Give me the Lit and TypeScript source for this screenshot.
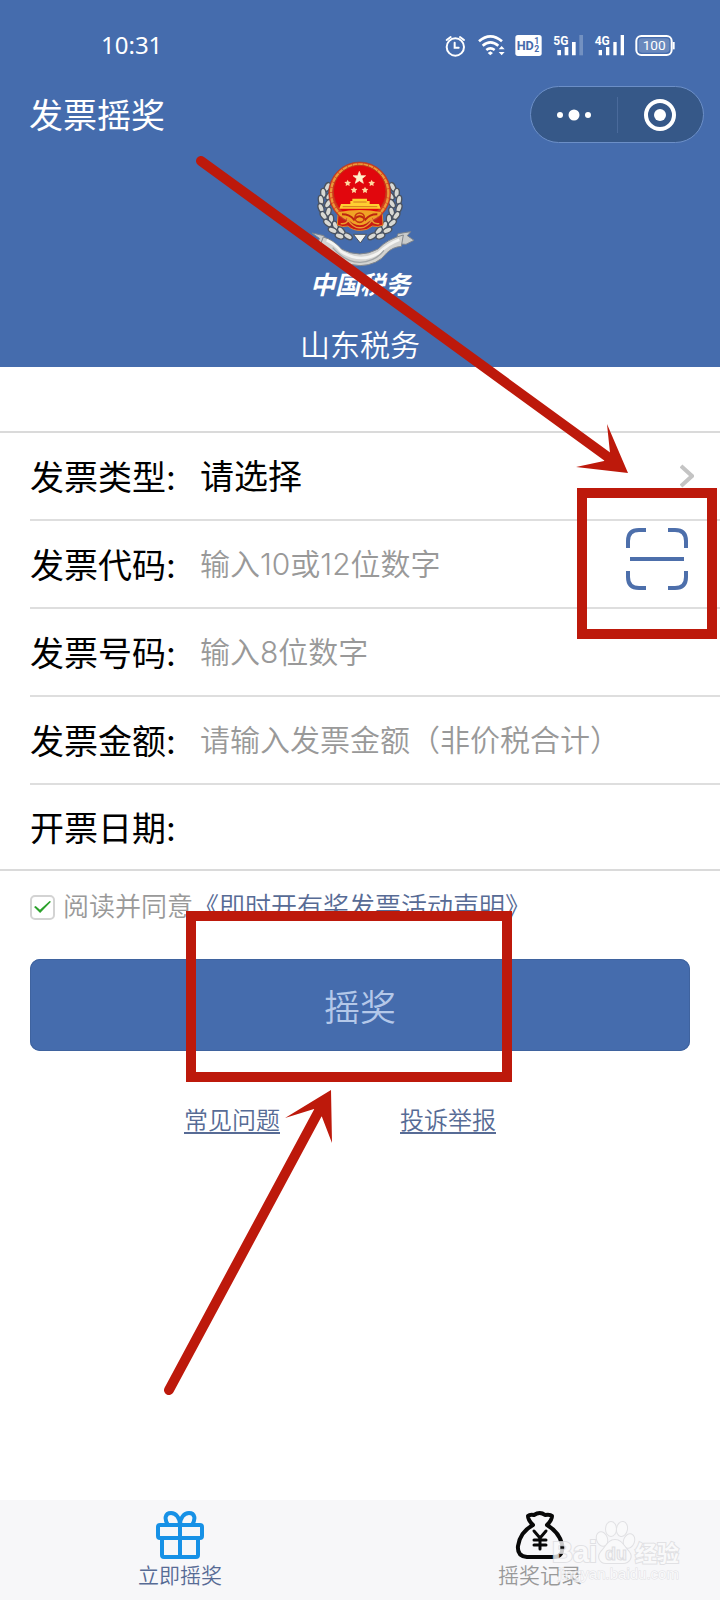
import { LitElement, html, svg, css } from "lit";
import { customElement, state } from "lit/decorators.js";

@customElement("status-icons")
class StatusIcons extends LitElement {
  static styles = css`
    :host { display: block; }
    .icons { display: block; width: 232px; height: 24px; fill: none; stroke: #fff; }
    .solid { fill: #fff; stroke: none; }
    .hd { fill: #456cad; stroke: none; font: 700 38px Roboto, sans-serif; }
    .hd-small { fill: #456cad; stroke: none; font: 700 26px Roboto, sans-serif; }
    .net { fill: #fff; stroke: none; font: 700 36px Roboto, sans-serif; }
    .level { fill: #fff; stroke: none; font: 400 41px Roboto, sans-serif; }
  `;
  render() {
    return html`<svg class="icons" viewBox="70 69 696 72" aria-hidden="true">
      <g stroke-width="6" stroke-linecap="round">
        <circle cx="104" cy="111" r="26" />
        <path d="M102 98v15h12M78 90l12-9M130 90l-12-9" />
      </g>
      <g stroke-width="8">
        <path d="M175 94Q209 64 244 94M186 107Q209 87 233 107M197 120Q209 110 222 120" />
      </g>
      <path class="solid" d="M209 124l8 5-8 7-8-7zM243 108l9 10h-18zM243 136l9-10h-18z" />
      <rect class="solid" x="284" y="75" width="79" height="63" rx="8" />
      <text class="hd" x="288" y="121">HD</text>
      <text class="hd-small" x="341" y="103">1</text>
      <text class="hd-small" x="341" y="127">2</text>
      <text class="net" x="398" y="105">5G</text>
      <path class="solid" d="M410 120h11v16h-11zM432 111h11v25h-11zM454 96h11v40h-11z" />
      <path class="solid" opacity=".25" d="M476 75h11v61h-11z" />
      <text class="net" x="522" y="105">4G</text>
      <path class="solid" d="M534 120h10v16h-10zM556 111h10v25h-10zM578 96h10v40h-10zM600 75h10v61h-10z" />
      <rect x="647" y="78" width="106" height="57" rx="15" stroke-width="6" />
      <rect class="solid" opacity=".2" x="654" y="85" width="92" height="43" rx="10" />
      <path d="M759 96v22" stroke-width="6" />
      <text class="level" x="666" y="121">100</text>
    </svg>`;
  }
}

@customElement("tax-emblem")
class TaxEmblem extends LitElement {
  static styles = css`
    :host { display: block; }
    .emblem { display: block; width: 108px; height: 108px; }
  `;
  private leaves(flip: boolean) {
    const spots = [
      [144, 140, 25], [132, 158, -5], [150, 167, 35], [125, 179, -8], [146, 190, 30],
      [125, 203, -20], [147, 214, 15], [133, 226, -35], [155, 236, 0], [145, 248, -50],
      [168, 256, -20], [160, 270, -65], [186, 272, -40], [181, 287, -70], [206, 288, -60],
    ];
    return svg`<g transform=${flip ? "translate(484 0) scale(-1 1)" : "translate(0 0)"}>
      ${spots.map(([x, y, r]) => svg`<ellipse cx=${x} cy=${y} rx="8" ry="14" fill="#d8d9d4" stroke="#4b5360" stroke-width="4" transform=${`rotate(${r} ${x} ${y})`} />`)}
    </g>`;
  }
  render() {
    return html`<svg class="emblem" viewBox="80 56 324 324" role="img" aria-label="中国税务">
      <path d="M98 278l36 8 4 26-22-4 4-14zM404 300l-20-14 10-12-38 6-10 30 34 2z" fill="#c9cbcb" stroke="#7c838c" stroke-width="3" />
      ${this.leaves(false)}${this.leaves(true)}
      <path d="M132 290q30 8 54 36 55 30 110 0 28-30 76-42l-6 34q-26 2-44 20-26 36-80 38-54-2-90-44-12-14-30-16z" fill="#d3d3d1" stroke="#81868c" stroke-width="3" />
      <path d="M142 300q24 10 44 34 56 36 112 4 28-28 62-40" fill="none" stroke="#f4f4f2" stroke-width="8" />
      <path d="M160 322q38 44 82 44 46-2 72-36" fill="none" stroke="#a2a6a8" stroke-width="4" />
      <path d="M222 282h40l-19 26z" fill="#f3f3ee" stroke="#4b5360" stroke-width="3" />
      <path d="M176 222l-2 32q16 8 32 3 15 14 37 13 21 1 36-13 17 5 32-3l-2-32z" fill="#c91b12" stroke="#e0862c" stroke-width="3" />
      <circle cx="241" cy="158" r="93" fill="#d83b1c" stroke="#a4432c" stroke-width="2" />
      <circle cx="241" cy="158" r="86" fill="none" stroke="#e89a3a" stroke-width="7" stroke-dasharray="14 2" />
      <circle cx="241" cy="154" r="79" fill="#e1070d" stroke="#be3c1a" stroke-width="3" />
      <path d="M240 93l5 13h14l-11 9 4 14-12-8-12 8 4-14-11-9h14z" fill="#fff3cc" stroke="#fff3cc" stroke-width="2" />
      <g fill="#ffd9a0">
        <path d="M205 118l3 6 7 1-5 5 1 7-6-3-6 3 1-7-5-5 7-1z" />
        <path d="M277 118l3 6 7 1-5 5 1 7-6-3-6 3 1-7-5-5 7-1z" />
        <path d="M224 139l3 6 7 1-5 5 1 7-6-3-6 3 1-7-5-5 7-1z" />
        <path d="M257 139l3 6 7 1-5 5 1 7-6-3-6 3 1-7-5-5 7-1z" />
      </g>
      <path d="M219 175h44v7h8v9h28l5 14H180l5-14h28v-9h6z" fill="#ffcf31" />
      <path d="M190 199h104M222 185h40" stroke="#d2751e" stroke-width="3" />
      <path d="M176 216q65-14 130 0-4 16-26 16l-18 17q-20 12-42 0l-18-17q-22 0-26-16z" fill="#f0a325" />
      <path d="M188 222q24 0 36 16 17-20 34 0 14-17 36-16" fill="none" stroke="#bd250f" stroke-width="6" />
      <circle cx="241" cy="232" r="14" fill="none" stroke="#c63412" stroke-width="5" />
      <path d="M184 250q18 2 22-10 18 24 36 22 18 2 36-22 5 12 22 10" fill="none" stroke="#eb9b31" stroke-width="4" />
    </svg>`;
  }
}

@customElement("guide-marks")
class GuideMarks extends LitElement {
  static styles = css`
    :host { display: block; position: absolute; inset: 0 0 auto 0; pointer-events: none; }
    .marks { display: block; width: 100%; }
    .frame { fill: none; stroke: #bd190b; stroke-width: 10; }
    .shaft { stroke: #bd190b; stroke-width: 10; stroke-linecap: round; }
    .head { fill: #bd190b; }
  `;
  render() {
    return html`<svg class="marks" viewBox="0 0 720 1600" aria-hidden="true">
      <rect class="frame" x="582" y="493" width="130" height="141" />
      <rect class="frame" x="191" y="916" width="316" height="161" />
      <path class="shaft" d="M201 161L612 460M169 1390L321 1107" />
      <path class="head" d="M628 473l-21-49 3 29-6 8-28 6zM331 1090l-46 28 29-9 8 8 10 26z" />
    </svg>`;
  }
}

@customElement("site-watermark")
class SiteWatermark extends LitElement {
  static styles = css`
    :host { display: block; position: absolute; right: 36px; bottom: 16px; pointer-events: none; }
    .mark { display: block; width: 132px; height: 64px; opacity: .8; }
    .ink { fill: #fafafb; stroke: #dcdcdf; stroke-width: 2; paint-order: stroke; }
    .hollow { fill: #f5f5f7; stroke: #d9d9dc; stroke-width: 1; }
    .latin { font: 700 29px "Liberation Sans", sans-serif; }
    .du { font: 700 18px "Liberation Sans", sans-serif; }
    .cjk { font: 700 22px "Noto Sans CJK SC", sans-serif; }
    .site { font: 400 15px "Liberation Sans", sans-serif; stroke-width: 1; }
  `;
  render() {
    return html`<svg class="mark" viewBox="552 1520 132 64" aria-hidden="true">
      <text class="ink latin" x="552" y="1562">Bai</text>
      <g class="ink">
        <ellipse cx="602" cy="1539" rx="5" ry="7" transform="rotate(-20 602 1539)" />
        <ellipse cx="611" cy="1529" rx="5" ry="7" />
        <ellipse cx="622" cy="1529" rx="5" ry="7" transform="rotate(10 622 1529)" />
        <ellipse cx="629" cy="1541" rx="5" ry="7" transform="rotate(20 629 1541)" />
        <path d="M615 1540c7 0 9 7 14 12 4 5 0 11-6 11h-17c-6 0-9-6-5-11 5-5 7-12 14-12z" />
      </g>
      <text class="hollow du" x="605" y="1560">du</text>
      <text class="ink cjk" x="635" y="1561">经验</text>
      <text class="ink site" x="558" y="1579">jingyan.baidu.com</text>
    </svg>`;
  }
}

@customElement("app-root")
class AppRoot extends LitElement {
  @state() private agreed = true;

  static styles = css`
    :host {
      display: flex; flex-direction: column; position: relative; min-height: 100vh;
      background: #fff; color: #111;
      font-family: Inter, "Noto Sans CJK SC", sans-serif; font-weight: 350;
    }
    * { box-sizing: border-box; }
    button, input, select { font: inherit; color: inherit; border: 0; background: none; padding: 0; margin: 0; border-radius: 0; }
    .top { background: #456cad; color: #fff; }
    .status { display: flex; align-items: center; justify-content: space-between; height: 66px; padding: 24px 44px 0 101px; }
    .time { font-size: 24px; line-height: 40px; font-family: "Noto Sans", sans-serif; font-weight: 400; }
    .nav { display: flex; align-items: center; justify-content: space-between; margin-top: 20px; padding: 0 16px 0 29px; }
    .title { margin: 0; padding-top: 2px; font-size: 34px; line-height: 48px; font-weight: 400; }
    .capsule { display: flex; align-items: center; width: 174px; height: 57px; border: 1px solid #6c8fc7; border-radius: 29px; background: #365888; }
    .capsule-button { flex: 1; display: flex; justify-content: center; }
    .capsule-button + .capsule-button { border-left: 1px solid #4a6a9b; }
    .capsule-icon { width: 36px; height: 36px; fill: #fff; }
    .brand { display: flex; flex-direction: column; align-items: center; padding-top: 16px; }
    .script { font-size: 25px; line-height: 36px; font-weight: 700; font-style: italic; }
    .region { margin-top: 20px; font-size: 30px; line-height: 44px; }
    .form { margin: 64px 0 0; border-top: 2px solid #dadada; border-bottom: 2px solid #dadada; }
    .row { display: flex; align-items: center; height: 88px; margin-left: 30px; border-bottom: 2px solid #dedede; }
    .row:last-child { height: 84px; border-bottom: 0; }
    .label { width: 170px; padding-top: 3px; font-size: 34px; line-height: 48px; font-weight: 400; color: #000; }
    .field { flex: 1; min-width: 0; height: 60px; font-size: 30px; outline: none; }
    .field::placeholder { color: #999; opacity: 1; }
    .picker { appearance: none; font-size: 34px; font-weight: 400; color: #000; }
    .chevron { width: 14px; height: 24px; margin-right: 26px; fill: none; stroke: #c4c4c4; stroke-width: 4; }
    .scan { display: block; margin-right: 32px; padding-bottom: 10px; }
    .scan-icon { display: block; width: 62px; height: 62px; fill: none; stroke: #4d6fab; stroke-width: 4; }
    .agree { display: flex; align-items: center; padding: 16px 30px 0; font-size: 26px; line-height: 40px; color: #999; }
    .tick { appearance: none; width: 25px; height: 25px; margin-right: 8px; border: 2px solid #d3d3d3; border-radius: 5px; display: grid; place-items: center; }
    .tick:checked::before { content: ""; width: 17px; height: 12px; background: #2ba12b; clip-path: polygon(0 50%, 10% 42%, 35% 72%, 92% 0, 100% 6%, 36% 100%); }
    .notice { color: #576b95; text-decoration: none; }
    .draw { display: block; width: calc(100% - 60px); height: 92px; margin: 32px 30px 0; border-radius: 10px; background: #456cad; color: #b4c8e9; font-size: 36px; box-shadow: inset 0 0 0 1px #3f639f; }
    .links { display: flex; justify-content: center; gap: 120px; margin-top: 52px; padding-right: 40px; }
    .link { color: #576b95; font-size: 24px; line-height: 36px; text-underline-offset: 3px; text-decoration-thickness: 2px; }
    .tabs { display: grid; grid-template-columns: 1fr 1fr; margin-top: auto; height: 100px; background: #f7f7f9; }
    .tab { display: flex; flex-direction: column; align-items: center; padding-top: 10px; font-size: 21px; line-height: 32px; color: #999; text-decoration: none; }
    .tab.current { color: #576b95; }
    .tab-icon { width: 50px; height: 50px; fill: none; }
  `;

  render() {
    return html`
      <header class="top">
        <div class="status"><span class="time">10:31</span><status-icons></status-icons></div>
        <div class="nav">
          <h1 class="title">发票摇奖</h1>
          <div class="capsule">
            <button class="capsule-button" aria-label="更多">
              <svg class="capsule-icon" viewBox="0 0 36 36"><circle cx="4" cy="18" r="3" /><circle cx="18" cy="18" r="5.5" /><circle cx="32" cy="18" r="3" /></svg>
            </button>
            <button class="capsule-button" aria-label="关闭">
              <svg class="capsule-icon" viewBox="0 0 36 36"><circle cx="18" cy="18" r="14" fill="none" stroke="#fff" stroke-width="4" /><circle cx="18" cy="18" r="6" /></svg>
            </button>
          </div>
        </div>
        <div class="brand">
          <tax-emblem></tax-emblem>
          <span class="script">中国税务</span>
          <span class="region">山东税务</span>
        </div>
      </header>

      <form class="form">
        <div class="row">
          <label class="label" for="kind">发票类型:</label>
          <select class="field picker" id="kind"><option>请选择</option></select>
          <svg class="chevron" viewBox="0 0 14 24"><path d="M1 2l11 10L1 22" /></svg>
        </div>
        <div class="row">
          <label class="label" for="code">发票代码:</label>
          <input class="field" id="code" placeholder="输入10或12位数字" />
          <button class="scan" type="button" aria-label="扫一扫">
            <svg class="scan-icon" viewBox="0 0 62 62"><path d="M2 20V13Q2 2 13 2H20M42 2H49Q60 2 60 13V20M60 43V49Q60 60 49 60H42M20 60H13Q2 60 2 49V43M4 31H58" /></svg>
          </button>
        </div>
        <div class="row">
          <label class="label" for="number">发票号码:</label>
          <input class="field" id="number" placeholder="输入8位数字" />
        </div>
        <div class="row">
          <label class="label" for="amount">发票金额:</label>
          <input class="field" id="amount" placeholder="请输入发票金额（非价税合计）" />
        </div>
        <div class="row">
          <label class="label" for="date">开票日期:</label>
          <input class="field" id="date" />
        </div>
      </form>

      <div class="agree">
        <input class="tick" id="agree" type="checkbox" .checked=${this.agreed}
          @change=${(e: Event) => { this.agreed = (e.target as HTMLInputElement).checked; }} />
        <label for="agree">阅读并同意</label>
        <a class="notice" href="#notice">《即时开有奖发票活动声明》</a>
      </div>
      <button class="draw" type="button">摇奖</button>
      <div class="links">
        <a class="link" href="#faq">常见问题</a>
        <a class="link" href="#report">投诉举报</a>
      </div>

      <nav class="tabs">
        <a class="tab current" href="#draw">
          <svg class="tab-icon" viewBox="0 0 50 50" stroke="#1791e6" stroke-width="4" stroke-linejoin="round">
            <rect x="3" y="15" width="44" height="13" rx="2" />
            <path d="M7 28V45Q7 47 9 47H41Q43 47 43 45V28M25 15V47M25 15C25 8 21 3 16 3C10 3 9 9 13 15M25 15C25 8 29 3 34 3C40 3 41 9 37 15" />
          </svg>
          <span>立即摇奖</span>
        </a>
        <a class="tab" href="#records">
          <svg class="tab-icon" viewBox="0 0 50 50" stroke="#080808" stroke-width="4" stroke-linejoin="round" stroke-linecap="round">
            <path d="M18 15Q13 10 13 6Q15 4 19 5Q25 1 30 5Q35 4 37 6Q37 10 32 15Q44 22 47 34Q49 47 39 47H12Q2 46 3 36Q5 22 18 15" />
            <path stroke-width="3" d="M19 21l6 7 6-7M25 28v11M19 30h12M19 35h12" />
          </svg>
          <span>摇奖记录</span>
        </a>
      </nav>

      <site-watermark></site-watermark>
      <guide-marks></guide-marks>
    `;
  }
}
